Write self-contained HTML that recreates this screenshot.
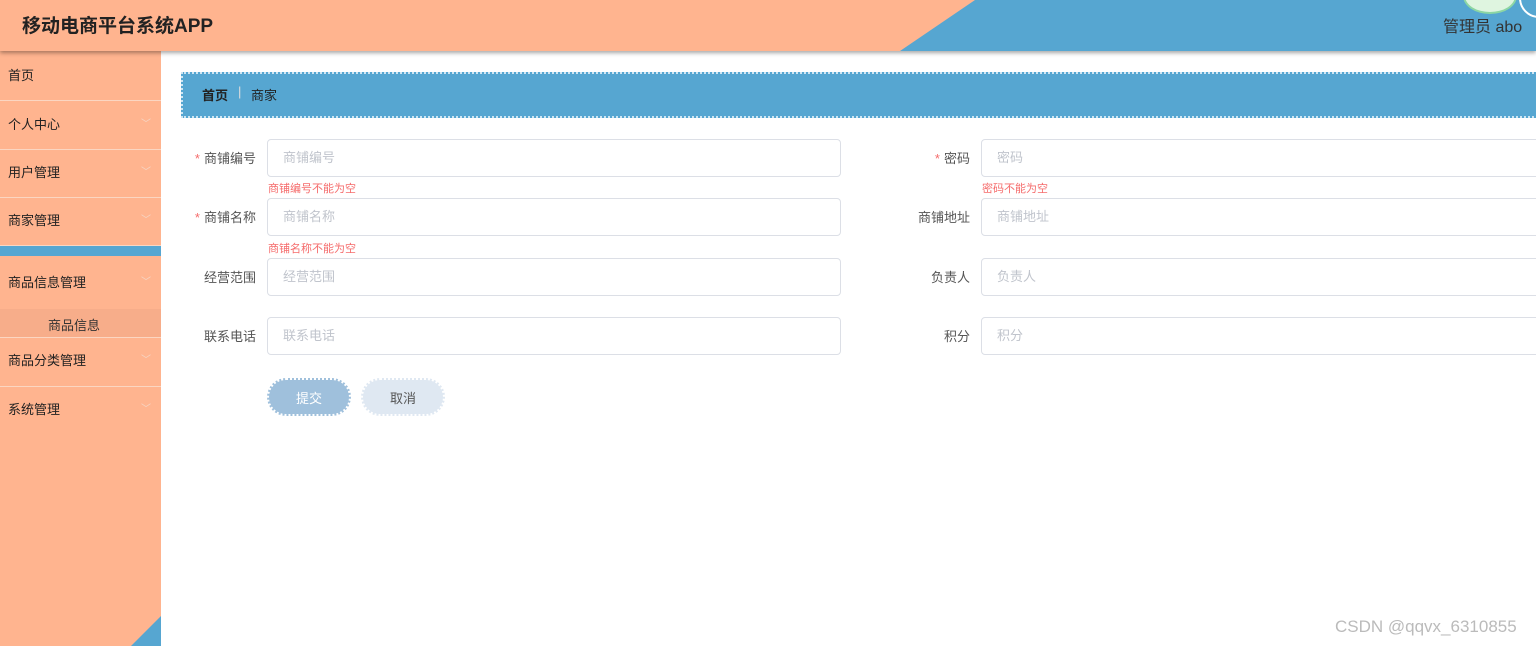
<!DOCTYPE html>
<html><head><meta charset="utf-8"><style>
*{margin:0;padding:0;box-sizing:border-box}
body{width:1536px;height:646px;overflow:hidden;background:#fff;font-family:"Liberation Sans","Noto Sans CJK SC",sans-serif;position:relative}
.hdr{position:absolute;left:0;top:0;width:1536px;height:51px;background:#FFB48F;box-shadow:0 2px 4px rgba(0,0,0,.35);overflow:hidden;z-index:2}
.hdr .blue{position:absolute;left:0;top:0;width:1536px;height:51px;background:#56A6D1;clip-path:polygon(975px 0,1536px 0,1536px 51px,900px 51px)}
.title{position:absolute;left:22px;top:11px;font-size:19px;font-weight:bold;color:#222}
.user{position:absolute;left:1443px;top:13px;font-size:16px;color:#333}
.av1{position:absolute;left:1463px;top:-22px;width:54px;height:36px;border-radius:50%;background:#dff5e0;border:2px solid #8cd6a3}
.av2{position:absolute;left:1519px;top:-22px;width:40px;height:40px;border-radius:50%;background:#56A6D1;border:2px solid #fff}
.side{position:absolute;left:0;top:51px;width:161px;height:595px;background:#FFB48F;overflow:hidden}
.side .tri{position:absolute;right:0;bottom:0;width:0;height:0;border-left:30px solid transparent;border-bottom:30px solid #56A6D1}
.mi{position:absolute;left:0;width:161px;font-size:13px;color:#222;padding-left:8px;border-bottom:1px solid #fbd6c2}
.mi .ar{position:absolute;right:10px;top:0;color:#f5d7c6;font-size:10px}
.sub{position:absolute;left:0;top:258px;width:161px;height:28px;background:#f7ad8a;font-size:13px;color:#333;padding-left:48px;line-height:34px}
.bc{position:absolute;left:181px;top:72px;width:1360px;height:46px;background:#56A6D1;border:2px dotted #cfe6f3;font-size:13px;color:#222}
.lbl{position:absolute;font-size:13px;color:#555;text-align:right}
.lbl i{color:#f56c6c;font-style:normal;margin-right:4px}
.inp{position:absolute;height:38px;border:1px solid #dcdfe6;border-radius:4px;background:#fff;font-size:13px;color:#c0c4cc;padding-left:15px;line-height:36px}
.err{position:absolute;font-size:11px;color:#f56c6c}
.btn{position:absolute;top:378px;height:38px;width:84px;border-radius:19px;font-size:13px;text-align:center;line-height:38px;border:2px dotted #fff}
</style></head><body>
<div class="hdr"><div class="blue"></div><div class="title">移动电商平台系统APP</div><div class="av1"></div><div class="av2"></div><div class="user">管理员 abo</div></div>
<div class="side">
<div class="mi" style="top:0;height:50px;line-height:50px">首页</div>
<div class="mi" style="top:50px;height:49px;line-height:48px">个人中心<span class="ar">﹀</span></div>
<div class="mi" style="top:99px;height:48px;line-height:46px">用户管理<span class="ar">﹀</span></div>
<div class="mi" style="top:147px;height:48px;line-height:46px">商家管理<span class="ar">﹀</span></div>
<div style="position:absolute;top:195px;left:0;width:161px;height:10px;background:#56A6D1"></div>
<div class="mi" style="top:206px;height:52px;line-height:52px;border:0">商品信息管理<span class="ar">﹀</span></div>
<div class="sub">商品信息</div>
<div class="mi" style="top:286px;height:50px;line-height:46px;border-top:1px solid #fbd6c2">商品分类管理<span class="ar">﹀</span></div>
<div class="mi" style="top:336px;height:48px;line-height:46px;border:0">系统管理<span class="ar">﹀</span></div>
<div class="tri"></div>
</div>
<div class="bc"><span style="position:absolute;left:19px;top:11px;font-weight:bold">首页</span><span style="position:absolute;left:55px;top:10px;color:#ddd">|</span><span style="position:absolute;left:68px;top:11px">商家</span></div>

<div class="lbl" style="left:180px;top:148px;width:76px"><i>*</i>商铺编号</div>
<div class="inp" style="left:267px;top:139px;width:574px">商铺编号</div>
<div class="err" style="left:268px;top:180px">商铺编号不能为空</div>
<div class="lbl" style="left:180px;top:207px;width:76px"><i>*</i>商铺名称</div>
<div class="inp" style="left:267px;top:198px;width:574px">商铺名称</div>
<div class="err" style="left:268px;top:240px">商铺名称不能为空</div>
<div class="lbl" style="left:180px;top:267px;width:76px">经营范围</div>
<div class="inp" style="left:267px;top:258px;width:574px">经营范围</div>
<div class="lbl" style="left:180px;top:326px;width:76px">联系电话</div>
<div class="inp" style="left:267px;top:317px;width:574px">联系电话</div>

<div class="lbl" style="left:880px;top:148px;width:90px"><i>*</i>密码</div>
<div class="inp" style="left:981px;top:139px;width:580px">密码</div>
<div class="err" style="left:982px;top:180px">密码不能为空</div>
<div class="lbl" style="left:880px;top:207px;width:90px">商铺地址</div>
<div class="inp" style="left:981px;top:198px;width:580px">商铺地址</div>
<div class="lbl" style="left:880px;top:267px;width:90px">负责人</div>
<div class="inp" style="left:981px;top:258px;width:580px">负责人</div>
<div class="lbl" style="left:880px;top:326px;width:90px">积分</div>
<div class="inp" style="left:981px;top:317px;width:580px">积分</div>

<div class="btn" style="left:267px;background:#9fc0dc;color:#fff">提交</div>
<div class="btn" style="left:361px;background:#dfe8f2;color:#555">取消</div>
<div style="position:absolute;left:1335px;top:617px;font-size:17px;color:#bbb">CSDN @qqvx_6310855</div>
</body></html>
